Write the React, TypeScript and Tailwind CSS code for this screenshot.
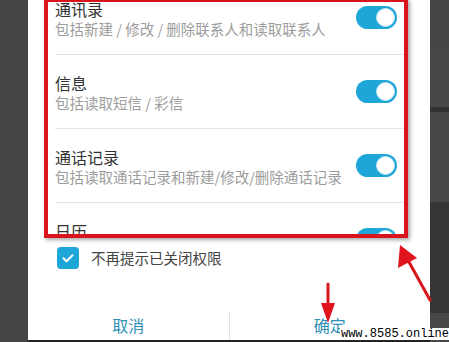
import React from "react";

const rows = [
  { title: "通讯录", desc: "包括新建 / 修改 / 删除联系人和读取联系人" },
  { title: "信息", desc: "包括读取短信 / 彩信" },
  { title: "通话记录", desc: "包括读取通话记录和新建/修改/删除通话记录" },
  { title: "日历", desc: "包括读取日历和新建/修改/删除日历" },
];

const Toggle = () => (
  <div className="w-[41px] h-[23px] rounded-full bg-[#1ea6d8] flex items-center justify-end pr-[2px] shrink-0">
    <div className="w-[19px] h-[19px] rounded-full bg-white border border-[#bfe6f3]" />
  </div>
);

const App = () => {
  return (
    <div
      className="relative w-[449px] h-[342px] overflow-hidden bg-[#444444] flex"
      style={{ fontFamily: '"Noto Sans CJK SC", "Noto Sans", sans-serif' }}
    >
      {/* left backdrop */}
      <div className="w-[28px] shrink-0 bg-[#444444]" />

      {/* dialog */}
      <div className="w-[402px] shrink-0 bg-white flex flex-col">
        <div className="h-[236px] overflow-hidden">
          <div className="-mt-[19px]">
            {rows.map((r, i) => (
              <div key={i}>
                <div className="h-[73px] flex items-center pl-[27px] pr-[33px]">
                  <div className="flex-1 pt-[3px]">
                    <div className="text-[16px] leading-[20px] text-[#333333]">{r.title}</div>
                    <div className="text-[14.5px] leading-[20px] text-[#9c9c9c] whitespace-nowrap">{r.desc}</div>
                  </div>
                  <Toggle />
                </div>
                <div className="h-px bg-[#e3e3e3] ml-[27px] mr-[24px]" />
              </div>
            ))}
          </div>
        </div>

        {/* checkbox */}
        <div className="h-[44px] flex items-center pl-[29px] gap-[12px]">
          <div className="w-[22px] h-[22px] rounded-[4px] bg-[#1ea6d8] flex items-center justify-center">
            <svg width="14" height="14" viewBox="0 0 14 14" fill="none">
              <path d="M2.5 7.2l3 3 6-6" stroke="white" strokeWidth="2" strokeLinecap="round" strokeLinejoin="round" />
            </svg>
          </div>
          <span className="text-[14.5px] text-[#444444]">不再提示已关闭权限</span>
        </div>

        <div className="flex-1" />

        {/* buttons */}
        <div className="h-[34px] flex items-center">
          <div className="flex-1 text-center text-[16px] text-[#2f8fb5] pt-[4px]">取消</div>
          <div className="w-px h-[28px] bg-[#e3e3e3] self-end" />
          <div className="flex-1 text-center text-[16px] text-[#2f8fb5] pt-[4px]">确定</div>
        </div>
        <div className="h-[2px] bg-[#222222]" />
      </div>

      {/* right backdrop bands */}
      <div className="w-[19px] shrink-0 flex flex-col">
        <div className="h-[50px] bg-[#454545]" />
        <div className="h-[57px] bg-[#474747]" />
        <div className="h-[5px] bg-[#313131]" />
        <div className="h-[90px] bg-[#474747]" />
        <div className="h-[111px] bg-[#353535]" />
        <div className="flex-1 bg-[#474747]" />
      </div>

      {/* red annotation box */}
      <div className="absolute left-[44px] top-[-2px] w-[364px] h-[240px] border-[4px] border-[#d8141c] shadow-[2px_2px_4px_rgba(0,0,0,0.35)]" />

      {/* arrows */}
      <svg className="absolute inset-0" width="449" height="342" viewBox="0 0 449 342">
        <line x1="430" y1="300" x2="409" y2="262" stroke="#d8141c" strokeWidth="3" strokeLinecap="round" />
        <polygon points="400,245 398,268 417,258" fill="#e0141c" />
        <line x1="328" y1="284" x2="328" y2="308" stroke="#d8141c" strokeWidth="3" strokeLinecap="round" />
        <polygon points="328,323 321,303 335,303" fill="#e0141c" />
      </svg>

      {/* watermark */}
      <div
        className="absolute right-0 bottom-[2px] bg-white text-black text-[12px] leading-[12px] pl-[1px]"
        style={{ fontFamily: '"Liberation Mono", monospace' }}
      >
        www.8585.online
      </div>
    </div>
  );
};

export default App;
